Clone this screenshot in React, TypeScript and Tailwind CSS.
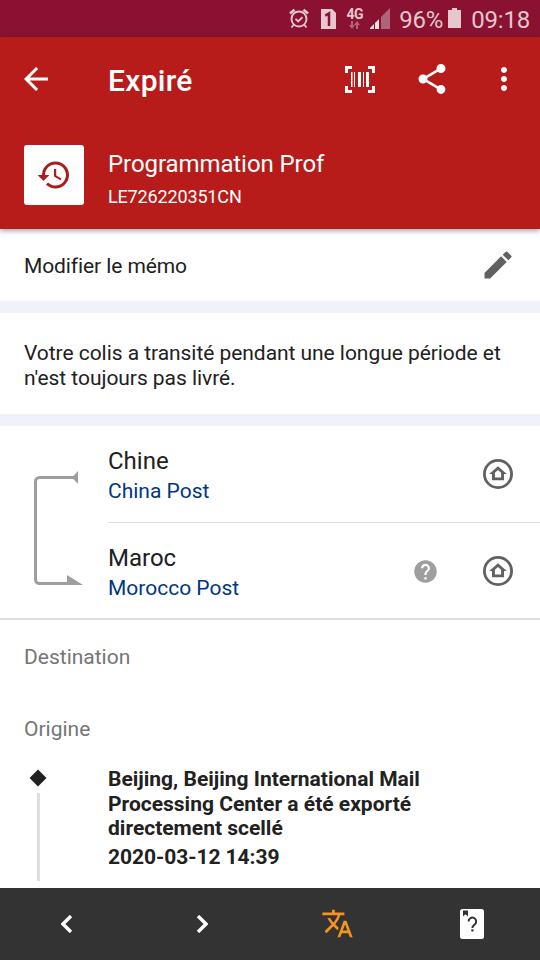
import type { ReactNode } from "react";
import {
  MdArrowBack,
  MdEdit,
  MdHelp,
  MdHistory,
  MdMoreVert,
  MdShare,
  MdTranslate,
} from "react-icons/md";

interface Country {
  name: string;
  carrier: string;
  hint?: boolean;
}

const countries: Country[] = [
  { name: "Chine", carrier: "China Post" },
  { name: "Maroc", carrier: "Morocco Post", hint: true },
];

function AlarmIcon() {
  return (
    <svg width="20" height="21" viewBox="0 0 20 21" fill="none" stroke="#e6c6cf">
      <circle cx="10" cy="11" r="7.5" strokeWidth="1.9" />
      <path d="m6.500 10.800 2.700 2.700 4.300-4.300" strokeWidth="1.9" />
      <path d="M1 5.500 5.500 1.700M19 5.500l-4.500-3.800" strokeWidth="2.6" />
      <path d="m4.500 17-2 2.500M15.500 17l2 2.500" strokeWidth="1.9" />
    </svg>
  );
}

function SimIcon() {
  return (
    <svg width="15" height="20" viewBox="0 0 15 20">
      <path d="M0 0h11l4 4v16H0z" fill="#e6c6cf" />
      <path d="M4.300 6.600 8 4.400V17" fill="none" stroke="#8a1230" strokeWidth="2.5" />
    </svg>
  );
}

function DataArrows() {
  return (
    <svg width="11" height="8" viewBox="0 0 11 8" fill="#b06379">
      <path d="M2 0h2v4h2L3 8 0 4h2zM7 8h2V4h2L8 0 5 4h2z" />
    </svg>
  );
}

function SignalIcon() {
  return (
    <svg width="20" height="21" viewBox="0 0 20 21">
      <path d="M11 9 20 0v21h-9z" fill="#b0647a" />
      <path d="M0 21v-1l4-4v5zM5 21v-6l4-4v10z" fill="#f3dfe4" />
    </svg>
  );
}

function BatteryIcon() {
  return (
    <svg width="13" height="20" viewBox="0 0 13 20" fill="#e6c6cf">
      <path d="M4 0h5v2h4v18H0V2h4z" />
    </svg>
  );
}

function BarcodeIcon() {
  return (
    <svg width="30" height="27" viewBox="0 0 30 27" fill="#fff">
      <path d="M0 0h7v3H3v4H0zM23 0h7v7h-3V3h-4zM0 20h3v4h4v3H0zM27 20h3v7h-7v-3h4z" />
      <path d="M6 6h1.500v15H6zM9 6h1v15H9zM13 6h3v15h-3zM18 6h1v15h-1zM21 6h3v15h-3z" />
    </svg>
  );
}

function HomeCircleIcon() {
  return (
    <svg width="30" height="30" viewBox="0 0 30 30" fill="none" stroke="#616161">
      <circle cx="15" cy="15" r="13.6" strokeWidth="2.8" />
      <path
        d="M15 7.200 23.800 15H21v6.200H9V15H6.200z M15 10.900l-3.100 2.800V18.500h6.200V13.700z"
        fill="#616161"
        fillRule="evenodd"
        stroke="none"
      />
    </svg>
  );
}

// Bracket going from the sender country down to the receiver
function RouteArrow() {
  return (
    <svg width="49" height="116" viewBox="0 0 49 116" fill="#9e9e9e">
      <path
        d="M40 8.500H5.500a4 4 0 0 0-4 4v98a4 4 0 0 0 4 4H36"
        fill="none"
        stroke="#9e9e9e"
        strokeWidth="3"
      />
      <path d="M38 8.500 44 2v13zM33 106l16 10H33z" />
    </svg>
  );
}

function GuideIcon() {
  return (
    <svg width="24" height="30" viewBox="0 0 24 30">
      <rect width="24" height="30" rx="2.5" fill="#fff" />
      <path d="M3 1.500h5V7.500L5.500 5.300 3 7.500z" fill="#333" />
      <path
        d="M8.600 12.500a3.800 3.800 0 1 1 6.400 2.700c-1.600 1.400-2.600 1.900-2.600 3.800"
        fill="none"
        stroke="#333"
        strokeWidth="2"
      />
      <path d="M11.300 20.300h2.200v2.200h-2.200z" fill="#333" />
    </svg>
  );
}

function TabButton({ label, children }: { label: string; children: ReactNode }) {
  return (
    <button aria-label={label} className="flex-1 flex items-center justify-center pr-px">
      {children}
    </button>
  );
}

export default function App() {
  return (
    <div className="w-[540px] h-[960px] flex flex-col overflow-hidden bg-white text-[#212121] font-['Roboto','Liberation_Sans',sans-serif]">
      {/* Status bar */}
      <div className="h-[37px] shrink-0 flex items-center justify-end pr-[10px] bg-[#8a1230] text-[#e6c6cf]">
        <AlarmIcon />
        <div className="ml-[12px]">
          <SimIcon />
        </div>
        <div className="w-[17px] ml-[10px] flex flex-col items-center">
          <span className="text-[14px] leading-[13px] font-bold tracking-[-0.5px]">4G</span>
          <DataArrows />
        </div>
        <div className="ml-[7px]">
          <SignalIcon />
        </div>
        <span className="ml-[9px] mt-[3px] text-2xl leading-7 tracking-[-0.2px]">96%</span>
        <div className="ml-[5px] mb-px">
          <BatteryIcon />
        </div>
        <span className="ml-[10px] mt-[3px] text-2xl leading-7 tracking-[-0.2px]">09:18</span>
      </div>

      {/* Header */}
      <header className="h-48 shrink-0 z-10 bg-[#b71c1a] text-white shadow-[0_2px_5px_rgba(0,0,0,0.35)]">
        <div className="h-[84px] flex items-center pl-[18px] pr-[18px]">
          <MdArrowBack size={36} />
          <h1 className="ml-[54px] mt-[3px] text-[30px] leading-9 font-medium tracking-[0.3px]">Expiré</h1>
          <div className="ml-auto flex items-center">
            <BarcodeIcon />
            <MdShare size={36} className="ml-[39px]" />
            <MdMoreVert size={36} className="ml-9" />
          </div>
        </div>
        <div className="flex pl-6 pt-6">
          <div className="size-[60px] flex items-center justify-center rounded-[3px] bg-white text-[#a81e20]">
            <MdHistory size={36} />
          </div>
          <div className="ml-6 pt-[5px]">
            <div className="text-2xl leading-7 tracking-[-0.08px]">Programmation Prof</div>
            <div className="mt-[8px] text-lg leading-[21px] tracking-[-0.15px]">LE726220351CN</div>
          </div>
        </div>
      </header>

      {/* Memo */}
      <div className="h-[72px] shrink-0 flex items-center justify-between pl-6 pr-[24px] text-[21px]">
        <span className="mt-[3px] tracking-[-0.1px]">Modifier le mémo</span>
        <MdEdit size={36} className="text-[#616161]" />
      </div>

      <div className="h-[125px] shrink-0 border-y-12 border-[#eff2f8] pl-6 pt-[28px] text-[21px] leading-[24.5px] tracking-[-0.05px]">
        Votre colis a transité pendant une longue période et n'est toujours pas livré.
      </div>

      {/* Route */}
      <div className="h-[194px] shrink-0 flex border-b-2 border-[#dedede]">
        <div className="w-[108px] pl-[34px] pt-[43px]">
          <RouteArrow />
        </div>
        <div className="flex-1">
          {countries.map((country) => (
            <div
              key={country.name}
              className="h-[97px] flex items-center pr-[27px] border-b border-[#dedede] last:border-b-0"
            >
              <div className="pt-[2px]">
                <div className="text-2xl leading-7">{country.name}</div>
                <div className="mt-[4px] text-[21px] leading-[25px] text-[#003781]">{country.carrier}</div>
              </div>
              <div className="ml-auto mb-px flex items-center">
                {country.hint && <MdHelp size={27} className="mr-[44px] text-[#9e9e9e]" />}
                <HomeCircleIcon />
              </div>
            </div>
          ))}
        </div>
      </div>

      {/* Tracking events */}
      <div className="flex-1 flex flex-col overflow-hidden text-[21px] leading-[24.5px]">
        <div className="h-[72px] shrink-0 flex items-center pl-6 pt-[2px] text-[#757575]">Destination</div>
        <div className="h-[72px] shrink-0 flex items-center pl-6 pt-[2px] text-[#757575]">Origine</div>
        <div className="flex">
          <div className="w-[108px] flex flex-col items-center pr-[32px] pt-[8px]">
            <div className="size-3 rotate-45 bg-[#212121]" />
            <div className="mt-[9px] h-[88px] w-[3px] bg-[#dedede]" />
          </div>
          <div className="w-[340px] pt-[3px] font-bold">
            <div>Beijing, Beijing International Mail Processing Center a été exporté directement scellé</div>
            <div className="mt-1 tracking-[-0.05px]">2020-03-12 14:39</div>
          </div>
        </div>
      </div>

      {/* Bottom bar */}
      <nav className="h-[72px] shrink-0 flex bg-[#333] text-white">
        <TabButton label="Précédent">
          <svg width="12" height="18" viewBox="0 0 12 18" fill="none" stroke="currentColor" strokeWidth="3.4">
            <path d="M10 1 2 9l8 8" />
          </svg>
        </TabButton>
        <TabButton label="Suivant">
          <svg width="12" height="18" viewBox="0 0 12 18" fill="none" stroke="currentColor" strokeWidth="3.4">
            <path d="m2 1 8 8-8 8" />
          </svg>
        </TabButton>
        <TabButton label="Traduire">
          <MdTranslate size={33} className="mb-px text-[#f7941d]" />
        </TabButton>
        <TabButton label="Guide">
          <GuideIcon />
        </TabButton>
      </nav>
    </div>
  );
}
